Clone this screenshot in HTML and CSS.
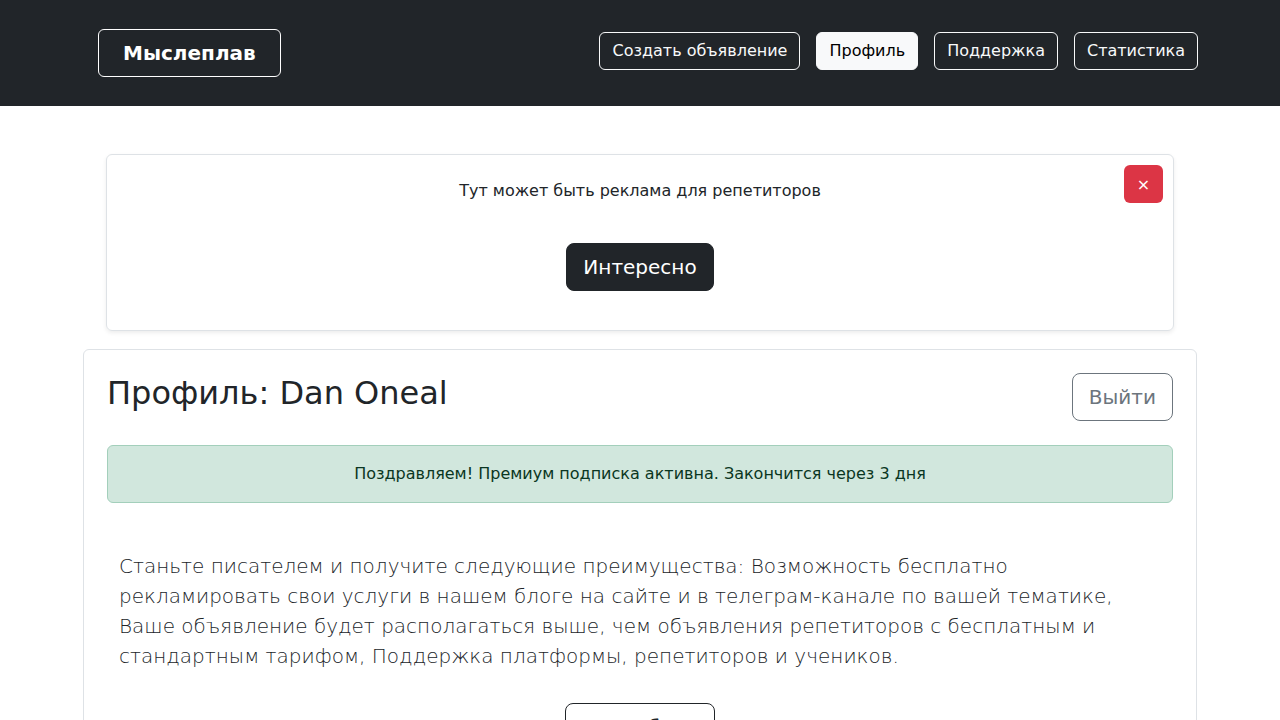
FILE: index.html
```html
<!DOCTYPE html>
<html lang="ru">
<head>
<meta charset="utf-8">
<title>Мыслеплав — Профиль</title>
<link rel="stylesheet" href="styles.css">
</head>
<body>
<header class="navbar">
  <div class="container nav-inner">
    <a class="brand" href="#">Мыслеплав</a>
    <nav class="nav-links">
      <a class="nav-btn" href="#">Создать объявление</a>
      <a class="nav-btn active" href="#">Профиль</a>
      <a class="nav-btn" href="#">Поддержка</a>
      <a class="nav-btn" href="#">Статистика</a>
    </nav>
  </div>
</header>
<main class="container">
  <section class="ad-card">
    <button class="ad-close" type="button">×</button>
    <p class="ad-text">Тут может быть реклама для репетиторов</p>
    <a class="btn-dark-lg" href="#">Интересно</a>
  </section>
  <section class="profile-card">
    <div class="profile-head">
      <h2 class="profile-title">Профиль: Dan Oneal</h2>
      <a class="btn-logout" href="#">Выйти</a>
    </div>
    <div class="alert-success">Поздравляем! Премиум подписка активна. Закончится через 3 дня</div>
    <p class="lead">Станьте писателем и получите следующие преимущества: Возможность бесплатно рекламировать свои услуги в нашем блоге на сайте и в телеграм-канале по вашей тематике, Ваше объявление будет располагаться выше, чем объявления репетиторов с бесплатным и стандартным тарифом, Поддержка платформы, репетиторов и учеников.</p>
    <div class="center">
      <a class="btn-outline-dark-lg" href="#">Подробнее</a>
    </div>
  </section>
</main>
</body>
</html>
```

FILE: styles.css
```css
* { box-sizing: border-box; }
body {
  margin: 0;
  font-family: "DejaVu Sans", sans-serif;
  font-size: 16px;
  line-height: 1.5;
  color: #212529;
  background: #fff;
}
a { text-decoration: none; }
.container {
  width: 1140px;
  margin: 0 auto;
  padding: 0 12px;
}
.navbar {
  background: #212529;
  height: 106px;
  padding-top: 29px;
}
.nav-inner {
  display: flex;
  justify-content: space-between;
  align-items: flex-start;
}
.brand {
  margin-left: 16px;
  display: inline-block;
  border: 1px solid #fff;
  border-radius: 6px;
  color: #fff;
  font-weight: bold;
  font-size: 20px;
  line-height: 24px;
  padding: 11px 24px;
}
.nav-links {
  display: flex;
  gap: 16px;
  margin-top: 3px;
}
.nav-btn {
  display: inline-block;
  border: 1px solid #f8f9fa;
  border-radius: 6px;
  color: #f8f9fa;
  font-size: 16px;
  line-height: 24px;
  padding: 6px 12px;
}
.nav-btn.active {
  background: #f8f9fa;
  color: #000;
}
.ad-card {
  position: relative;
  margin: 48px 24px 0;
  border: 1px solid #dee2e6;
  border-radius: 6px;
  box-shadow: 0 2px 4px rgba(0,0,0,0.075);
  padding: 24px 24px 39px;
  text-align: center;
}
.ad-text {
  margin: 0 0 40px;
}
.ad-close {
  position: absolute;
  top: 10px;
  right: 10px;
  width: 39px;
  height: 38px;
  border: none;
  border-radius: 6px;
  background: #dc3545;
  color: #fff;
  font-family: "DejaVu Sans", sans-serif;
  font-size: 16px;
  padding: 0;
}
.btn-dark-lg {
  display: inline-block;
  background: #212529;
  color: #fff;
  border: 1px solid #212529;
  border-radius: 8px;
  font-size: 20px;
  line-height: 30px;
  padding: 8px 16px;
}
.profile-card {
  margin: 18px 0 0 1px;
  border: 1px solid #dee2e6;
  border-radius: 6px;
  padding: 23px 23px 40px;
  width: 1114px;
}
.profile-head {
  display: flex;
  justify-content: space-between;
  align-items: flex-start;
}
.profile-title {
  margin: 0;
  font-size: 32px;
  font-weight: 500;
  line-height: 1.2;
  padding-top: 1px;
}
.btn-logout {
  display: inline-block;
  border: 1px solid #6c757d;
  border-radius: 8px;
  color: #6c757d;
  font-size: 20px;
  line-height: 30px;
  padding: 8px 16px;
}
.alert-success {
  margin-top: 24px;
  background: #d1e7dd;
  border: 1px solid #a3cfbb;
  border-radius: 6px;
  color: #0a3622;
  text-align: center;
  padding: 16px;
  line-height: 24px;
}
.lead {
  margin: 48px 12px 0;
  font-size: 20px;
  font-weight: 300;
  line-height: 30px;
  color: #212529;
}
.center {
  text-align: center;
  margin-top: 32px;
}
.btn-outline-dark-lg {
  display: inline-block;
  border: 1px solid #212529;
  border-radius: 8px;
  color: #212529;
  font-size: 20px;
  line-height: 30px;
  padding: 8px 16px;
  min-width: 150px;
}
```
